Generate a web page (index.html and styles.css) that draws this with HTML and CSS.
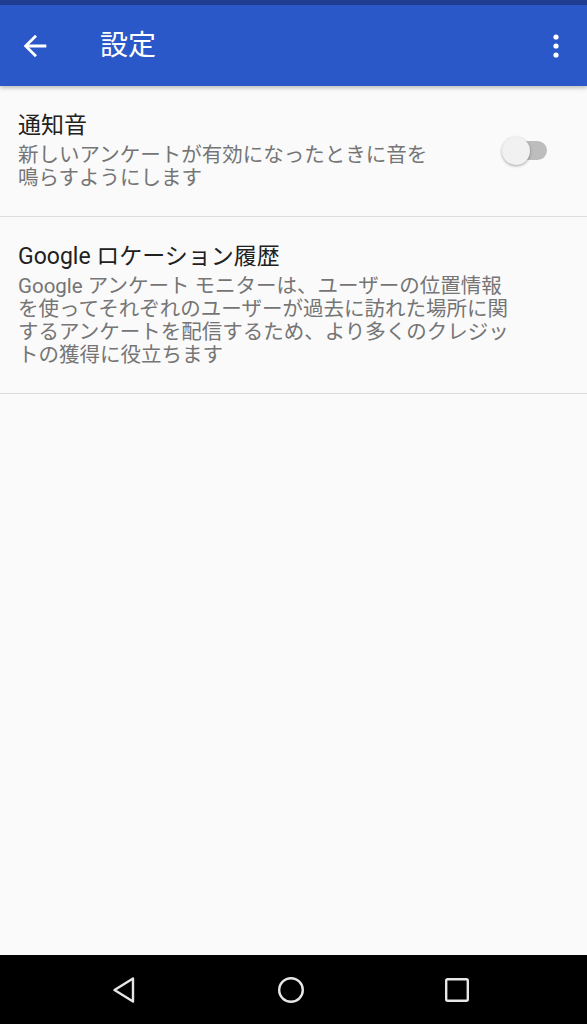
FILE: index.html
```html
<!DOCTYPE html>
<html lang="ja">
<head>
<meta charset="utf-8">
<title>設定</title>
<link rel="stylesheet" href="styles.css">
</head>
<body>
<div class="screen">
  <div class="status"></div>
  <header class="appbar">
    <svg class="back" viewBox="0 0 24 24" width="34" height="34"><path d="M20 11H7.83l5.59-5.59L12 4l-8 8 8 8 1.41-1.41L7.83 13H20v-2z" fill="#fff"/></svg>
    <h1 class="title">設定</h1>
    <svg class="more" viewBox="0 0 6 24" width="6" height="24"><circle cx="3" cy="3" r="2.6" fill="#fff"/><circle cx="3" cy="12" r="2.6" fill="#fff"/><circle cx="3" cy="21" r="2.6" fill="#fff"/></svg>
  </header>
  <main class="content">
    <div class="pref">
      <div class="pref-text narrow">
        <div class="pref-title">通知音</div>
        <div class="pref-summary">新しいアンケートが有効になったときに音を鳴らすようにします</div>
      </div>
      <div class="switch"><span class="track"></span><span class="thumb"></span></div>
    </div>
    <div class="pref">
      <div class="pref-text wide">
        <div class="pref-title">Google ロケーション履歴</div>
        <div class="pref-summary">Google アンケート モニターは、ユーザーの位置情報を使ってそれぞれのユーザーが過去に訪れた場所に関するアンケートを配信するため、より多くのクレジットの獲得に役立ちます</div>
      </div>
    </div>
  </main>
  <nav class="navbar">
    <svg viewBox="0 0 26 30" width="26" height="30"><path d="M22 3.5 L3.5 15 L22 26.5 Z" fill="none" stroke="#e6e6e6" stroke-width="2.4" stroke-linejoin="round"/></svg>
    <svg viewBox="0 0 28 28" width="28" height="28"><circle cx="14" cy="14" r="11.8" fill="none" stroke="#e6e6e6" stroke-width="2.4"/></svg>
    <svg viewBox="0 0 26 26" width="26" height="26"><rect x="2.2" y="2.2" width="21.6" height="21.6" rx="1.5" fill="none" stroke="#e6e6e6" stroke-width="2.4"/></svg>
  </nav>
</div>
</body>
</html>
```

FILE: styles.css
```css
html, body {
  margin: 0;
  padding: 0;
}
body {
  font-family: Roboto, "Noto Sans CJK JP", sans-serif;
  background: #fafafa;
}
.screen {
  width: 587px;
  height: 1024px;
  display: flex;
  flex-direction: column;
  overflow: hidden;
}
.status {
  height: 5px;
  background: #1f3d92;
  flex: none;
}
.appbar {
  height: 81px;
  flex: none;
  background: #2b58c8;
  display: flex;
  align-items: center;
  padding: 0 28px 0 18px;
  box-shadow: 0 2px 4px rgba(0, 0, 0, 0.25);
  position: relative;
  z-index: 1;
}
.back {
  flex: none;
}
.title {
  margin: 0 0 0 48px;
  font-size: 28px;
  font-weight: 400;
  color: #fff;
  flex: 1;
  line-height: 1;
}
.more {
  flex: none;
}
.content {
  flex: 1;
  background: #fafafa;
}
.pref {
  display: flex;
  align-items: center;
  padding: 25px 18px 26px 18px;
  border-bottom: 1px solid #dedede;
}
.pref-text {
  flex: none;
}
.narrow {
  width: 420px;
}
.wide {
  width: 496px;
}
.pref-title {
  font-size: 23px;
  line-height: 30px;
  color: #212121;
}
.pref-summary {
  margin-top: 3px;
  font-size: 20.5px;
  line-height: 23px;
  color: #757575;
}
.switch {
  position: relative;
  width: 47px;
  height: 30px;
  margin-left: auto;
  margin-right: 21px;
}
.track {
  position: absolute;
  left: 13px;
  top: 5px;
  width: 33px;
  height: 19px;
  border-radius: 10px;
  background: #bdbdbd;
}
.thumb {
  position: absolute;
  left: 1px;
  top: 1px;
  width: 28px;
  height: 28px;
  border-radius: 50%;
  background: #f1f1f1;
  box-shadow: 0 1px 3px rgba(0, 0, 0, 0.35);
}
.navbar {
  height: 69px;
  flex: none;
  background: #000;
  display: flex;
  align-items: center;
  justify-content: space-between;
  padding: 0 117px 0 111px;
}
```
